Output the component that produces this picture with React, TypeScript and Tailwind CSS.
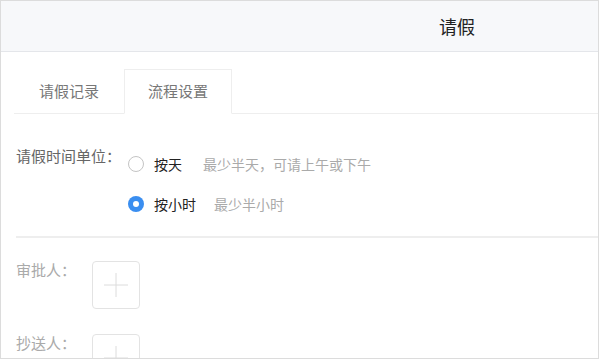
import React from "react";

function Radio({ checked }: { checked: boolean }) {
  return checked ? (
    <span className="flex h-[16px] w-[16px] shrink-0 items-center justify-center rounded-full bg-[#3a8ef0]">
      <span className="h-[6px] w-[6px] rounded-full bg-white" />
    </span>
  ) : (
    <span className="h-[16px] w-[16px] shrink-0 rounded-full border border-[#c4c4c4] bg-white" />
  );
}

function PlusBox() {
  return (
    <div className="flex h-[48px] w-[48px] shrink-0 items-center justify-center rounded-[4px] border border-[#e3e3e3] bg-white">
      <svg width="26" height="26" viewBox="0 0 26 26">
        <path d="M13 1v24M1 13h24" stroke="#dcdcdc" strokeWidth="1" fill="none" />
      </svg>
    </div>
  );
}

export default function App() {
  return (
    <div
      className="h-[359px] w-[599px] overflow-hidden border border-[#dcdcdc] bg-white"
      style={{ fontFamily: '"Noto Sans CJK SC", "Noto Sans", sans-serif' }}
    >
      <div className="flex h-[51px] items-center border-b border-[#e4e6ea] bg-[#f7f8fa] pl-[438px]">
        <span className="text-[18px] leading-[24px] text-[#222]">请假</span>
      </div>

      <div className="mt-[17px] pl-[13px]">
        <div className="flex h-[45px] border-b border-[#eeeeee]">
          <div className="flex w-[110px] items-center justify-center text-[15px] text-[#777]">请假记录</div>
          <div className="-mb-px flex w-[108px] items-center justify-center border border-[#eeeeee] border-b-white bg-white text-[15px] text-[#777]">
            流程设置
          </div>
        </div>

        <div className="flex pl-[2px] pt-[30px]">
          <div className="mt-[2px] w-[112px] text-[15px] leading-[20px] text-[#666]">请假时间单位：</div>
          <div className="flex flex-col">
            <div className="flex h-[40px] items-center">
              <Radio checked={false} />
              <span className="ml-[10px] text-[14px] text-[#222]">按天</span>
              <span className="ml-[21px] text-[14px] text-[#aaa]">最少半天，可请上午或下午</span>
            </div>
            <div className="flex h-[40px] items-center">
              <Radio checked={true} />
              <span className="ml-[10px] text-[14px] text-[#222]">按小时</span>
              <span className="ml-[18px] text-[14px] text-[#aaa]">最少半小时</span>
            </div>
          </div>
        </div>

        <div className="mt-[12px] ml-[2px] h-[2px] bg-[#eeeeee]" />

        <div className="flex flex-col gap-[24px] pl-[2px] pt-[22px]">
          <div className="flex items-start">
            <div className="w-[76px] text-[15px] leading-[20px] text-[#aaa]">审批人：</div>
            <div className="mt-[1px]">
              <PlusBox />
            </div>
          </div>
          <div className="flex items-start">
            <div className="w-[76px] text-[15px] leading-[20px] text-[#aaa]">抄送人：</div>
            <div className="mt-[1px]">
              <PlusBox />
            </div>
          </div>
        </div>
      </div>
    </div>
  );
}
